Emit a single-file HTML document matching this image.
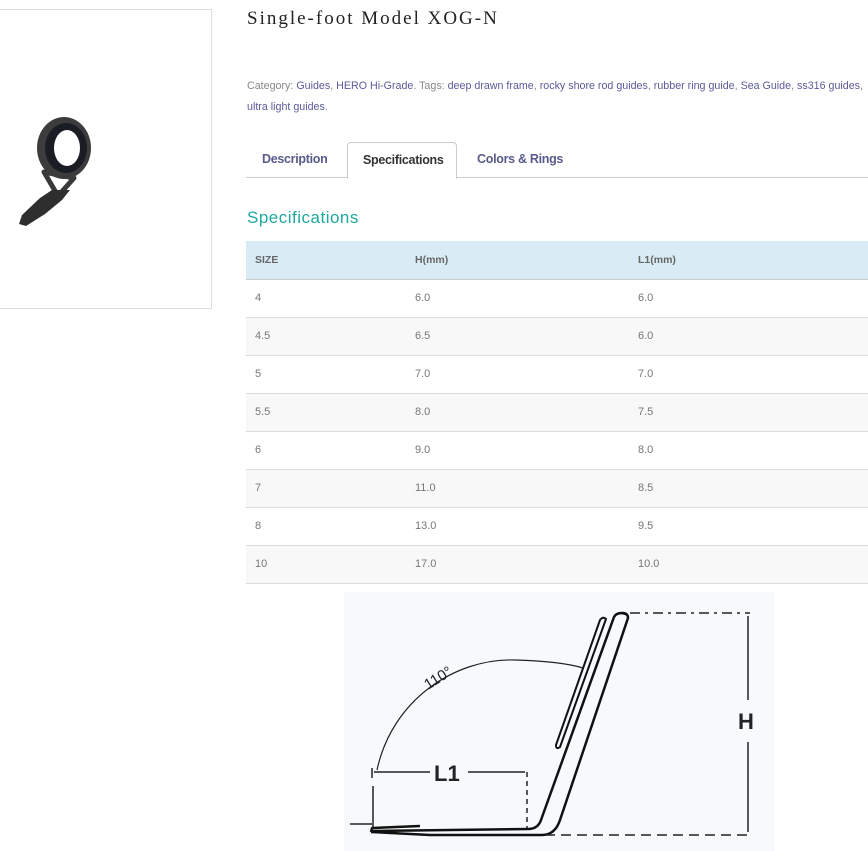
<!DOCTYPE html>
<html><head><meta charset="utf-8"><style>
*{margin:0;padding:0;box-sizing:border-box}
body{width:868px;height:851px;overflow:hidden;background:#fff;font-family:"Liberation Sans",sans-serif;position:relative}
.img{position:absolute;left:-1px;top:9px;width:213px;height:300px;border:1px solid #ddd}
h1{position:absolute;left:247px;top:8px;font-family:"Liberation Serif",serif;font-weight:normal;font-size:19px;letter-spacing:2px;color:#222;white-space:nowrap}
.meta{position:absolute;left:247px;top:76px;font-size:10.7px;line-height:21px;color:#888;width:640px;white-space:nowrap;letter-spacing:0}
.meta a{color:#5a5a9a;text-decoration:none}
.tabs{position:absolute;left:246px;top:142px;width:622px;height:36px;border-bottom:1px solid #ccc}
.tab{position:absolute;top:0;height:36px;font-size:12.5px;font-weight:bold;color:#5a5a8a;line-height:35px;letter-spacing:-0.3px}
.tab.act{border:1px solid #ccc;border-bottom:1px solid #fff;border-radius:4px 4px 0 0;background:#fff;color:#333;padding:0 15px;width:110px;height:37px}
h2{position:absolute;left:247px;top:208px;font-size:17px;font-weight:normal;color:#1fa8a0;letter-spacing:.5px}
table{position:absolute;left:246px;top:241px;width:622px;border-collapse:collapse;font-size:11px;color:#777}
td{height:38px;padding-left:9px;border-bottom:1px solid #ddd}
tr.h td{background:#d9ecf5;color:#666;font-weight:bold;font-size:10.5px;border-bottom:1px solid #ccc}
tr:nth-child(odd):not(.h) td{background:#f8f8f8}
</style></head><body>
<div class="img"></div>
<svg style="position:absolute;left:0;top:0" width="212" height="300">
<path d="M44 172 L58 196 L74 178 Z" fill="#fff" stroke="#3a3a3a" stroke-width="5" stroke-linejoin="round"/>
<path d="M52 190 L40 198 L22 215 L19 224 L26 226 L45 214 L62 200 L70 190 Z" fill="#2e2e2e"/>
<ellipse cx="64" cy="148" rx="27" ry="31" fill="#3c3c3c"/>
<ellipse cx="66" cy="148" rx="21" ry="25" fill="#1a1d24"/>
<ellipse cx="67" cy="148" rx="13" ry="18" fill="#fff"/>
</svg>
<h1>Single-foot Model XOG-N</h1>
<div class="meta">Category: <a>Guides</a>, <a>HERO Hi-Grade</a>. Tags: <a>deep drawn frame</a>, <a>rocky shore rod guides</a>, <a>rubber ring guide</a>, <a>Sea Guide</a>, <a>ss316 guides</a>,<br><a>ultra light guides</a>.</div>
<div class="tabs">
<div class="tab" style="left:16px">Description</div>
<div class="tab act" style="left:101px">Specifications</div>
<div class="tab" style="left:231px">Colors &amp; Rings</div>
</div>
<h2>Specifications</h2>
<table>
<tr class="h"><td style="width:160px">SIZE</td><td style="width:223px">H(mm)</td><td>L1(mm)</td></tr>
<tr><td>4</td><td>6.0</td><td>6.0</td></tr>
<tr><td>4.5</td><td>6.5</td><td>6.0</td></tr>
<tr><td>5</td><td>7.0</td><td>7.0</td></tr>
<tr><td>5.5</td><td>8.0</td><td>7.5</td></tr>
<tr><td>6</td><td>9.0</td><td>8.0</td></tr>
<tr><td>7</td><td>11.0</td><td>8.5</td></tr>
<tr><td>8</td><td>13.0</td><td>9.5</td></tr>
<tr><td>10</td><td>17.0</td><td>10.0</td></tr>
</table>
<svg style="position:absolute;left:0;top:0" width="868" height="851">
<rect x="344" y="592" width="430" height="259" fill="#f7fafc"/>
<g fill="none" stroke="#111" stroke-width="2.5" stroke-linejoin="round">
<path d="M371 831 L528 829 Q538 829 541 820 L614 617 Q616 613 622 613 L626 614"/>
<path d="M371 832 L372 828 L420 826 M371 832 L430 835 L542 835 Q555 835 560 820 L628 618 Q628 613 622 613"/>
<path d="M600 620 Q603 616 606 619 L560 747 Q556 750 556 745 Z" stroke-width="2"/>
</g>
<path d="M377 770 C392 700 455 658 515 660 C550 661 570 664 583 668" fill="none" stroke="#222" stroke-width="1.2"/>
<text x="0" y="0" transform="translate(428 690) rotate(-32)" font-size="15" fill="#222" font-family="Liberation Sans">110°</text>
<g stroke="#222" stroke-width="1.5" fill="none">
<path d="M630 613 H750" stroke-dasharray="10 5 3 5"/>
<path d="M545 835 H750" stroke-dasharray="10 6"/>
<path d="M748 616 V700 M748 742 V832"/>
<path d="M374 772 H430 M468 772 H525"/>
<path d="M527 772 V828" stroke-dasharray="5 4"/>
<path d="M372 768 V778 M373 786 V828 M350 824 H372"/>
</g>
<text x="738" y="729" font-size="22" font-weight="bold" fill="#222">H</text>
<text x="434" y="781" font-size="22" font-weight="bold" fill="#222">L1</text>
</svg>
</body></html>
